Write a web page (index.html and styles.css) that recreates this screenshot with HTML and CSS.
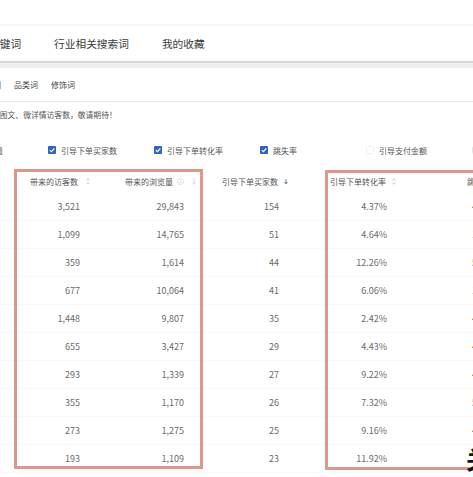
FILE: index.html
```html
<!DOCTYPE html>
<html lang="zh-CN">
<head>
<meta charset="utf-8">
<title>关键词</title>
<link rel="stylesheet" href="styles.css">
</head>
<body>
<div class="page">
  <div class="top"></div>
  <nav class="tabs">
    <span class="tab">关键词</span>
    <span class="tab">行业相关搜索词</span>
    <span class="tab">我的收藏</span>
  </nav>
  <div class="tabs-band"></div>
  <div class="subtabs">
    <span class="sub">核心词</span>
    <span class="sub">品类词</span>
    <span class="sub">修饰词</span>
  </div>
  <p class="notice"><span class="notice-text">暂不支持统计图文、微详情访客数，敬请期待！</span></p>
  <div class="checks">
    <label class="chk"><svg class="box" viewBox="0 0 8 8"><rect width="8" height="8" rx="1" fill="#2f63c4"/><path d="M1.8 4.1 L3.4 5.6 L6.3 2.5" fill="none" stroke="#fff" stroke-width="1.1"/></svg>带来的浏览量</label>
    <label class="chk"><svg class="box" viewBox="0 0 8 8"><rect width="8" height="8" rx="1" fill="#2f63c4"/><path d="M1.8 4.1 L3.4 5.6 L6.3 2.5" fill="none" stroke="#fff" stroke-width="1.1"/></svg>引导下单买家数</label>
    <label class="chk"><svg class="box" viewBox="0 0 8 8"><rect width="8" height="8" rx="1" fill="#2f63c4"/><path d="M1.8 4.1 L3.4 5.6 L6.3 2.5" fill="none" stroke="#fff" stroke-width="1.1"/></svg>引导下单转化率</label>
    <label class="chk"><svg class="box" viewBox="0 0 8 8"><rect width="8" height="8" rx="1" fill="#2f63c4"/><path d="M1.8 4.1 L3.4 5.6 L6.3 2.5" fill="none" stroke="#fff" stroke-width="1.1"/></svg>跳失率</label>
    <label class="chk"><svg class="box" viewBox="0 0 8 8"><rect x="0.5" y="0.5" width="7" height="7" rx="1" fill="#fff" stroke="#f0f0f0"/></svg>引导支付金额</label>
    <label class="chk"><svg class="box" viewBox="0 0 8 8"><rect x="0.5" y="0.5" width="7" height="7" rx="1" fill="#fff" stroke="#e4e4e4"/></svg>引导支付买家数</label>
  </div>

  <div class="table">
    <div class="row thead">
      <span class="c0"></span>
      <span class="c1">带来的访客数<svg class="sort" viewBox="0 0 4 7"><path d="M2 0 L4 2.6 L0 2.6Z M2 7 L4 4.4 L0 4.4Z" fill="#dadada"/></svg></span>
      <span class="c2">带来的浏览量<svg class="info" viewBox="0 0 7 7"><circle cx="3.5" cy="3.5" r="3" fill="none" stroke="#d6d6d6" stroke-width="0.8"/><path d="M3.5 3 V5.2 M3.5 1.8 V2.3" stroke="#d6d6d6" stroke-width="0.8"/></svg><svg class="sort far" viewBox="0 0 4 7"><path d="M2 0 V6 M0.4 4.4 L2 6.4 L3.6 4.4" fill="none" stroke="#d2d2d2" stroke-width="0.8"/></svg></span>
      <span class="c3">引导下单买家数<svg class="sort down" viewBox="0 0 4 7"><path d="M2 1 V5.5 M0.5 4 L2 6 L3.5 4" fill="none" stroke="#63708c" stroke-width="0.9"/></svg></span>
      <span class="c4">引导下单转化率<svg class="sort" viewBox="0 0 4 7"><path d="M2 0 L4 2.6 L0 2.6Z M2 7 L4 4.4 L0 4.4Z" fill="#dadada"/></svg></span>
      <span class="c5">跳失率</span>
    </div>
    <div class="row"><span class="c0"></span><span class="c1">3,521</span><span class="c2">29,843</span><span class="c3">154</span><span class="c4">4.37%</span><span class="c5">45.21%</span></div>
    <div class="row"><span class="c0"></span><span class="c1">1,099</span><span class="c2">14,765</span><span class="c3">51</span><span class="c4">4.64%</span><span class="c5">14.33%</span></div>
    <div class="row"><span class="c0"></span><span class="c1">359</span><span class="c2">1,614</span><span class="c3">44</span><span class="c4">12.26%</span><span class="c5">51.08%</span></div>
    <div class="row"><span class="c0"></span><span class="c1">677</span><span class="c2">10,064</span><span class="c3">41</span><span class="c4">6.06%</span><span class="c5">19.62%</span></div>
    <div class="row"><span class="c0"></span><span class="c1">1,448</span><span class="c2">9,807</span><span class="c3">35</span><span class="c4">2.42%</span><span class="c5">47.90%</span></div>
    <div class="row"><span class="c0"></span><span class="c1">655</span><span class="c2">3,427</span><span class="c3">29</span><span class="c4">4.43%</span><span class="c5">43.15%</span></div>
    <div class="row"><span class="c0"></span><span class="c1">293</span><span class="c2">1,339</span><span class="c3">27</span><span class="c4">9.22%</span><span class="c5">42.66%</span></div>
    <div class="row"><span class="c0"></span><span class="c1">355</span><span class="c2">1,170</span><span class="c3">26</span><span class="c4">7.32%</span><span class="c5">54.37%</span></div>
    <div class="row"><span class="c0"></span><span class="c1">273</span><span class="c2">1,275</span><span class="c3">25</span><span class="c4">9.16%</span><span class="c5">41.85%</span></div>
    <div class="row"><span class="c0"></span><span class="c1">193</span><span class="c2">1,109</span><span class="c3">23</span><span class="c4">11.92%</span><span class="c5"></span></div>

    <div class="mark mark1"></div>
    <div class="mark mark2"></div>
    <div class="stamp">关</div>
  </div>
</div>
</body>
</html>
```

FILE: styles.css
```css
* { box-sizing: border-box; }

body {
  margin: 0;
  background: #fff;
  font-family: "Noto Sans CJK SC", "Noto Sans", sans-serif;
}

.page {
  width: 473px;
  height: 477px;
  overflow: hidden;
  position: relative;
  background: #fff;
}

.top {
  height: 26px;
  border-bottom: 2px solid #f6f6f6;
}

.tabs {
  height: 37px;
  display: flex;
  align-items: center;
  gap: 33px;
  margin-left: -11px;
  font-size: 10.7px;
  color: #3a3a3a;
  white-space: nowrap;
  border-bottom: 2px solid #d5d5d5;
}

.tabs-band {
  height: 5px;
  background: #eeeeee;
}

.subtabs {
  height: 34px;
  display: flex;
  align-items: center;
  gap: 13px;
  margin-left: -23px;
  font-size: 8px;
  color: #444;
  white-space: nowrap;
  border-bottom: 1px solid #ebebeb;
}

.notice {
  margin: 0;
  height: 24px;
  display: flex;
  align-items: center;
  font-size: 7.8px;
  color: #555;
  white-space: nowrap;
}

.notice-text {
  margin-left: -47px;
}

.checks {
  height: 43px;
  padding-top: 18px;
  margin-left: -58px;
  display: grid;
  grid-template-columns: repeat(6, 106px);
  align-items: start;
  font-size: 8px;
  color: #555;
  white-space: nowrap;
}

.chk {
  display: flex;
  align-items: center;
  gap: 5px;
  height: 12px;
}

.box {
  width: 8px;
  height: 8px;
  flex: none;
}

.table {
  position: relative;
  width: 540px;
}

.row {
  display: grid;
  grid-template-columns: 14px 76px 113px 122px 115px 100px;
  height: 28px;
  align-items: center;
  font-size: 9px;
  color: #6a6a6a;
  white-space: nowrap;
  border-bottom: 1px solid #f9f9f9;
}

.row.thead {
  height: 24px;
  font-size: 8px;
  color: #555;
  border-bottom: none;
}

.row > span {
  display: flex;
  align-items: center;
}

.c1 { justify-content: flex-end; padding-right: 10px; }
.c2 { justify-content: flex-end; padding-right: 19px; }
.c3 { justify-content: flex-end; padding-right: 46px; }
.c4 { justify-content: flex-end; padding-right: 53px; }
.c5 { justify-content: flex-start; padding-left: 32px; }

.thead .c1 { justify-content: flex-start; padding: 0 0 0 16px; }
.thead .c2 { justify-content: flex-start; padding: 0 0 0 35px; }
.thead .c3 { justify-content: flex-start; padding: 0 0 0 19px; }
.thead .c4 { justify-content: flex-start; padding: 0 0 0 5px; }
.thead .c5 { justify-content: flex-start; padding: 0 0 0 27px; }

.sort {
  width: 4px;
  height: 7px;
  margin-left: 8px;
  flex: none;
}

.sort.down { margin-left: 6px; }
.sort.far { margin-left: 8px; }

.thead .c4 .sort { margin-left: 6px; }

.info {
  width: 7px;
  height: 7px;
  margin-left: 4px;
  flex: none;
}

.mark {
  position: absolute;
  top: 0;
  height: 300px;
  border: 3px solid #de968d;
  pointer-events: none;
}

.mark1 {
  left: 14px;
  width: 189px;
}

.mark2 {
  left: 325px;
  width: 210px;
  top: 1px;
}

.stamp {
  position: absolute;
  left: 466px;
  top: 278px;
  font-size: 24px;
  line-height: 24px;
  font-weight: 700;
  color: #111;
}
```
